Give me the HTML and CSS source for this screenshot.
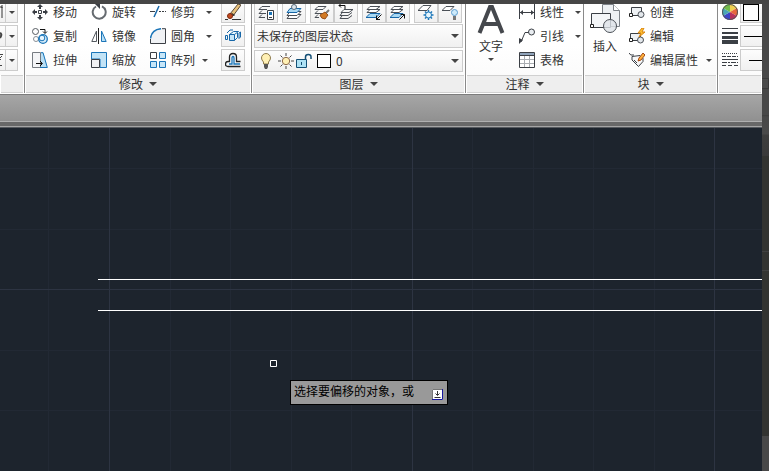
FILE: index.html
```html
<!DOCTYPE html>
<html lang="zh-CN">
<head>
<meta charset="utf-8">
<title>绘图</title>
<link rel="stylesheet" href="styles.css">
</head>
<body>
<div class="titlebar"></div>
<main class="app">
  <div class="ribbon">
    <section class="panel panel-edge">
      <div class="body">
        <button class="split" aria-label="绘图一"><svg class="cut" viewBox="0 0 5 16"><path d="M0 3h2v11M2 1v3" stroke="#333" fill="none"/></svg><i class="arrow"></i></button>
        <button class="split" aria-label="绘图二"><svg class="cut" viewBox="0 0 5 16"><path d="M0 5q2 1 1 3t-1 2" stroke="#444" stroke-width="2" fill="none"/></svg><i class="arrow"></i></button>
        <button class="split" aria-label="绘图三"><svg class="cut" viewBox="0 0 5 16"><path d="M0 2.500h3M0 7.500h1M0 13.500h2M2 4l-2 2" stroke="#444" fill="none"/></svg><i class="arrow"></i></button>
      </div>
      <div class="caption"></div>
    </section>

    <section class="panel panel-modify">
      <div class="body modify">
        <button class="cmd"><svg class="ico" viewBox="0 0 16 16"><path d="M8 0l3 3H9v2H7V3H5zM8 16l3-3H9v-2H7v2H5zM0 8l3-3v2h2v2H3v2zM16 8l-3-3v2h-2v2h2v2z" fill="#3b3f45"/><path d="M6.500 6.500h3v3h-3z" fill="#fff" stroke="#3b3f45"/></svg>移动</button>
        <button class="cmd"><svg class="ico" viewBox="0 0 16 16"><path d="M5 2.500A6.500 6.500 0 1 0 11 2.300" fill="none" stroke="#666b70" stroke-width="2"/><path d="M4 0h5v5z" fill="#3b3f45"/></svg>旋转</button>
        <button class="cmd"><svg class="ico" viewBox="0 0 16 16"><path d="M0 7.500h5M9 7.500h2M12 7.500h2M15 7.500h1" stroke="#3b3f45"/><path d="M4 13L9 2" stroke="#1767a8" stroke-width="1.500"/></svg>修剪<i class="arrow"></i></button>
        <button class="tool" aria-label="删除"><svg class="ico" viewBox="0 0 16 16"><path d="M5 10l8-10 3 1-8 11z" fill="#e9c27c" stroke="#5a4a38"/><path d="M7 9l3 2-1 1-3-2z" fill="#333"/><circle cx="5" cy="12" r="2.500" fill="#c4481c" stroke="#7c2b10"/><path d="M0 15.500h3M7 15.500h9" stroke="#333"/></svg></button>

        <button class="cmd"><svg class="ico" viewBox="0 0 16 16"><circle cx="3.500" cy="3.500" r="3" fill="#fff" stroke="#555a60"/><circle cx="4" cy="11" r="2.500" fill="#fff" stroke="#8a9096"/><circle cx="11" cy="11" r="4.300" fill="#d5ecfa" stroke="#1b75b8" stroke-width="1.300"/><circle cx="10" cy="10" r="2.800" fill="#e8f5fd" stroke="#1b75b8"/><path d="M8 1.500h5V5M11 3.500l2 2 2-2" fill="none" stroke="#111"/></svg>复制</button>
        <button class="cmd"><svg class="ico" viewBox="0 0 16 16"><path d="M5.500 3v10.500H.800z" fill="#fff" stroke="#555a60"/><path d="M10.500 3v10.500h4.700z" fill="#b9dff5" stroke="#1b75b8"/><path d="M7.500 0v16" stroke="#222"/></svg>镜像</button>
        <button class="cmd"><svg class="ico" viewBox="0 0 16 16"><path d="M.500 15.500v-4Q1.500 1.500 11.500.500h4v15z" fill="#f0f2f5"/><path d="M.500 10.500Q1.500 1.500 11 .700" fill="none" stroke="#1b75b8" stroke-width="1.500"/><path d="M.500 11v4.500h15V.700H12" fill="none" stroke="#3b3f45"/></svg>圆角<i class="arrow"></i></button>
        <button class="tool" aria-label="分解"><svg class="ico" viewBox="0 0 16 16"><path d="M4.500 6.500h5v6h-5z" fill="#c7e6f8" stroke="#1767a8"/><path d="M4.500 6.500l4-3h5l-4 3zM9.500 12.500l3-3V5" fill="#e8f6fd" stroke="#1767a8"/><path d="M.500 7.500h2v4h-2zM14 5l1.500-1v5L14 10.500z" fill="#e8f6fd" stroke="#1767a8"/><path d="M2 5l3-3h3" fill="none" stroke="#1767a8"/></svg></button>

        <button class="cmd"><svg class="ico" viewBox="0 0 16 16"><path d="M.500.500h8v15h-8z" fill="#f4f5f7" stroke="#777c82"/><path d="M9 .500h2.500l4 15H9z" fill="#b9dff5"/><path d="M9 .700h2l4.300 14.800H8" fill="none" stroke="#1b75b8"/><path d="M4 11.500h6M8 9l2.500 2.500L8 14" stroke="#111" fill="none"/></svg>拉伸</button>
        <button class="cmd"><svg class="ico" viewBox="0 0 16 16"><path d="M.500 6V.500h15v15H9V7H.500z" fill="#c2e3f6" stroke="#1b75b8"/><path d="M.500 7.500h8v8h-8z" fill="#f2f2f4" stroke="#3b3f45"/></svg>缩放</button>
        <button class="cmd tight"><svg class="ico" viewBox="0 0 16 16"><path d="M.500.500h6v6h-6z" fill="#fff" stroke="#3b3f45"/><path d="M9.500.500h6v6h-6zM.500 9.500h6v6h-6zM9.500 9.500h6v6h-6z" fill="#c7e6f8" stroke="#1b75b8"/></svg>阵列<i class="arrow"></i></button>
        <button class="tool" aria-label="偏移"><svg class="ico" viewBox="0 0 16 16"><path d="M15.500 14.500H3Q.500 14.500.500 12T3 9.500h1.500V5Q4.500 1.500 8 1.500T11.500 5v4.500h4" fill="#f4f8fb" stroke="#222" stroke-width="1.300"/><path d="M4 12h3V6q0-1.500 1-1.500T9 6v6h6" fill="none" stroke="#1b75b8" stroke-width="1.300"/></svg></button>
      </div>
      <div class="caption">修改<i class="arrow big"></i></div>
    </section>

    <section class="panel panel-layer">
      <div class="body layers">
        <div class="tools">
          <button class="tool" aria-label="图层特性"><svg class="ico" viewBox="0 0 16 16"><path d="M4 2.500h8M4 2.500l-3 3h8M4 6.500l-3 3h7M4 10.500l-3 3h6" fill="none" stroke="#4b5057"/><path d="M9.500 6.500h6v9h-6z" fill="#fff" stroke="#3b3f45"/><path d="M11 8h3v3h-3z" fill="#1b75b8"/><path d="M11 13.500h3" stroke="#3b3f45"/></svg></button>
          <button class="tool gap" aria-label="置为当前"><svg class="ico" viewBox="0 0 16 16"><path d="M4 10.500h11l-4 4H1z" fill="#fff" stroke="#4b5057"/><path d="M4 7.500h11l-4 4H1z" fill="#fff" stroke="#4b5057"/><path d="M4 4.500h11l-4 4H1z" fill="#a9d8f2" stroke="#1767a8"/><circle cx="8" cy="3" r="2.500" fill="#dce6ee" stroke="#5a6a78"/></svg></button>
          <button class="tool gap" aria-label="匹配图层"><svg class="ico" viewBox="0 0 16 16"><path d="M4 2.500h8l-3 3H1zM4 6.500l-3 3h7M4 10.500l-3 3h4" fill="none" stroke="#4b5057"/><path d="M12 9l3-3" stroke="#777" stroke-width="2"/><path d="M6 11l5-3 3 3-3 4q-4 0-5-4z" fill="#d27a24" stroke="#97501a"/></svg></button>
          <button class="tool" aria-label="上一个图层"><svg class="ico" viewBox="0 0 16 16"><path d="M6 5.500h9l-4 3H3zM4 9l-2 2.500h8l4-3M4 12l-2 2.500h8l4-3" fill="none" stroke="#4b5057"/><path d="M7 5V1.500H1M3-.500L1 1.500l2 2" fill="none" stroke="#111"/></svg></button>
          <button class="tool gap" aria-label="隔离"><svg class="ico" viewBox="0 0 16 16"><path d="M4 9.500h10l-4 4H0z" fill="#a9d8f2" stroke="#1767a8"/><path d="M4 5.500h10l-4 3H1zM4 2.500h10l-4 3H1z" fill="#fff" stroke="#4b5057"/><path d="M15.500 10.500l-5 5v-4M10 15.500h4" fill="none" stroke="#111"/></svg></button>
          <button class="tool" aria-label="取消隔离"><svg class="ico" viewBox="0 0 16 16"><path d="M4 9.500h9l-4 4H0z" fill="#a9d8f2" stroke="#1767a8"/><path d="M4 5.500h9l-4 3H1zM4 2.500h9l-4 3H1z" fill="#fff" stroke="#4b5057"/><path d="M9.500 15.500l5-5h-4M14.500 10.500v4" fill="none" stroke="#111"/></svg></button>
          <button class="tool gap" aria-label="冻结"><svg class="ico" viewBox="0 0 16 16"><path d="M5 1.500h8l-4 5H0z" fill="#fff" stroke="#4b5057"/><path d="M10.500 6v10M5.500 11h10M7 7.500l7 7M14 7.500l-7 7" stroke="#1b75b8" stroke-width="1.500"/><circle cx="10.500" cy="11" r="3" fill="#e5f5fd" stroke="#1b75b8"/></svg></button>
          <button class="tool" aria-label="关闭"><svg class="ico" viewBox="0 0 16 16"><path d="M4 2.500h8l-4 4H0z" fill="#fff" stroke="#4b5057"/><circle cx="12.500" cy="8.500" r="3" fill="#cdeafa" stroke="#5b9cd0"/><path d="M11 12h3v4h-3z" fill="#777"/></svg></button>
        </div>
        <label class="combo state"><select aria-label="图层状态"><option>未保存的图层状态</option></select><i class="arrow big"></i></label>
        <label class="combo layer">
          <svg class="bulb" viewBox="0 0 10 16"><path d="M2.500 11V9Q.500 7 .500 5a4.500 4.500 0 0 1 9 0q0 2-2 4v2z" fill="#fff0b4" stroke="#8d7a4a"/><path d="M3 11h4v3l-1 2H4l-1-2z" fill="#555"/></svg>
          <svg class="ico" viewBox="0 0 16 16"><path d="M8 0v3M8 13v3M0 8h3M13 8h3M2.500 2.500l2 2M11.500 11.500l2 2M13.500 2.500l-2 2M4.500 11.500l-2 2" stroke="#444"/><circle cx="8" cy="8" r="3.700" fill="#fff0b4" stroke="#8d6a4a"/></svg>
          <svg class="ico" viewBox="0 0 16 16"><path d="M.500 6.500h10v8H.500z" fill="#aee2f5" stroke="#134f75"/><path d="M9.500 6V4q0-2.500 2.800-2.500T15 4v2" fill="none" stroke="#134f75" stroke-width="1.500"/><path d="M5.500 9v3" stroke="#134f75"/></svg>
          <span class="swatch"></span>
          <select aria-label="图层"><option>0</option></select><i class="arrow big"></i>
        </label>
      </div>
      <div class="caption">图层<i class="arrow big"></i></div>
    </section>

    <section class="panel panel-note">
      <div class="body split-body">
        <button class="large"><svg class="large-ico" viewBox="0 0 30 30"><path d="M3.500 29L14 3h2l10.500 26M8 20h14" fill="none" stroke="#45484d" stroke-width="4"/></svg>文字<i class="arrow"></i></button>
        <div class="stack">
          <button class="cmd"><svg class="ico" viewBox="0 0 16 16"><path d="M.500 0v15M15.500 0v15M1 8.500h14" stroke="#3b3f45"/><path d="M1 8.500L4 6v5zM15 8.500L12 6v5z" fill="#3b3f45"/></svg>线性<i class="arrow"></i></button>
          <button class="cmd"><svg class="ico" viewBox="0 0 16 16"><circle cx="12.500" cy="4" r="3" fill="#e9edf1" stroke="#3b3f45"/><path d="M9.500 4.500H6L2 14" fill="none" stroke="#3b3f45"/><path d="M0 10l4 2-4 4z" fill="#3b3f45"/></svg>引线<i class="arrow"></i></button>
          <button class="cmd"><svg class="ico" viewBox="0 0 16 16"><path d="M.500.500h15v15H.500z" fill="#fff"/><path d="M1 1h14v2H1z" fill="#8fa3ba"/><path d="M1 7.500h14M1 11.500h14M5.500 4v11M10.500 4v11" stroke="#a9adb2"/><path d="M.500.500h15v15H.500zM0 3.500h16" fill="none" stroke="#3b3f45"/></svg>表格</button>
        </div>
      </div>
      <div class="caption">注释<i class="arrow big"></i></div>
    </section>

    <section class="panel panel-block">
      <div class="body split-body">
        <button class="large"><svg class="large-ico" viewBox="0 0 30 30"><path d="M12.500 .500h11l6 6v16h-17z" fill="#edf0f3" stroke="#7d8288"/><path d="M23.500 .500v6h6" fill="#fff" stroke="#7d8288"/><path d="M1.500 9.500h19v14h-19z" fill="#f4f6f8" stroke="#3b3f45"/><circle cx="20" cy="22" r="6.500" fill="#dfe3e8" fill-opacity=".8" stroke="#4b5057"/><path d="M.500 20.500h3v3h-3z" fill="#fff" stroke="#222"/></svg>插入</button>
        <div class="stack">
          <button class="cmd"><svg class="ico" viewBox="0 0 16 16"><path d="M2.500 3.500h10v8h-10z" fill="#eef1f4" stroke="#3b3f45"/><circle cx="12" cy="10.500" r="3" fill="#e4e8ec" stroke="#4b5057"/><path d="M.500 9.500h3v3h-3z" fill="#fff" stroke="#222"/></svg>创建</button>
          <button class="cmd"><svg class="ico" viewBox="0 0 16 16"><path d="M1.500 5.500h10v7h-10z" fill="#eef1f4" stroke="#3b3f45"/><circle cx="11.500" cy="12" r="3" fill="#e4e8ec" stroke="#4b5057"/><path d="M.500 10.500h3v3h-3z" fill="#fff" stroke="#222"/><path d="M13 0L9 5h3l-2 4 6-5h-3l2-4z" fill="#ffc234" stroke="#d98410"/></svg>编辑</button>
          <button class="cmd wide"><svg class="ico" viewBox="0 0 16 16"><path d="M0 1q1 3 5 2M3 4.500l8-1 3 3v3l-4.500 5L3 8z" fill="#f6f7f8" stroke="#3b3f45"/><path d="M5 8l3 3" stroke="#3b3f45"/><path d="M9 9l1-3 4-5 2 2-4 5z" fill="#ffb13a" stroke="#a34a18"/></svg>编辑属性<i class="arrow"></i></button>
        </div>
      </div>
      <div class="caption">块<i class="arrow big"></i></div>
    </section>

    <section class="panel panel-props">
      <div class="body props">
        <svg class="ico" viewBox="0 0 16 16"><path d="M8 8V0a8 8 0 0 1 7 4z" fill="#f0d050"/><path d="M8 8l7-4a8 8 0 0 1 0 8z" fill="#e8653d"/><path d="M8 8l7 4a8 8 0 0 1-7 4z" fill="#b8305c"/><path d="M8 8v8a8 8 0 0 1-7-4z" fill="#3d45c8"/><path d="M8 8l-7 4a8 8 0 0 1 0-8z" fill="#4aa7b5"/><path d="M8 8L1 4a8 8 0 0 1 7-4z" fill="#72bd4b"/><circle cx="8" cy="8" r="7.500" fill="none" stroke="#555"/></svg>
        <button class="field" aria-label="颜色"><span class="swatch tall"></span></button>
        <svg class="ico" viewBox="0 0 16 16"><path d="M0 .500h16" stroke="#3b3f45"/><path d="M0 5h16" stroke="#3b3f45" stroke-width="2"/><path d="M0 9.500h16" stroke="#3b3f45" stroke-width="3"/><path d="M0 14h16" stroke="#3b3f45" stroke-width="4"/></svg>
        <button class="field" aria-label="线宽"><span class="rule"></span></button>
        <svg class="ico" viewBox="0 0 16 16"><path d="M0 1.500h16" stroke="#3b3f45" stroke-dasharray="1 1"/><path d="M0 4.500h16" stroke="#3b3f45" stroke-dasharray="4 1"/><path d="M0 7.500h16" stroke="#3b3f45"/><path d="M0 10.500h16" stroke="#3b3f45" stroke-dasharray="5 1 2 1"/><path d="M0 13.500h16" stroke="#3b3f45" stroke-dasharray="4 2"/></svg>
        <button class="field" aria-label="线型"><span class="rule short"></span></button>
      </div>
      <div class="caption"></div>
    </section>
  </div>

  <div class="tabs"></div>
  <div class="frame"></div>

  <div class="canvas">
    <svg class="drawing" aria-label="图形">
      <g class="minor">
        <path d="M48.500 0v2000M170.500 0v2000M230.500 0v2000M291.500 0v2000M351.500 0v2000M472.500 0v2000M533.500 0v2000M593.500 0v2000M654.500 0v2000"/>
        <path d="M0 40.500h4000M0 101.500h4000M0 222.500h4000M0 282.500h4000"/>
      </g>
      <path class="major" d="M109.500 0v2000M412.500 0v2000M714.500 0v2000M0 161.500h4000"/>
      <path class="ink" d="M98 151.500h4000M98 182.500h4000"/>
      <path class="ink" d="M270.500 232.500h6v6h-6z"/>
    </svg>
    <div class="prompt">选择要偏移的对象，或
      <svg viewBox="0 0 11 11"><path d="M0 0h11v11H0z" fill="#fff"/><path d="M10.500 0v10.500H0" fill="none" stroke="#1717a0"/><path d="M.500 10V.500H10" fill="none" stroke="#777"/><path d="M5.500 2v4M3.500 4.500l2 2 2-2M2.500 8.500h6" fill="none" stroke="#333"/></svg>
    </div>
  </div>
</main>
<aside class="side"><div class="side-top"></div><div class="side-tab"></div><div class="side-fade"></div><div class="side-mid"></div><div class="side-slot"></div><div class="side-low"></div><div class="side-end"></div></aside>
</body>
</html>
```
FILE: styles.css
```css
* { box-sizing: border-box; }
body {
  margin: 0;
  min-height: 100vh;
  display: flex;
  overflow: hidden;
  background: #1d242d;
  font: 12px/16px "Noto Sans CJK SC", sans-serif;
  color: #333;
}
button, select {
  font: inherit;
  color: inherit;
  margin: 0;
  padding: 0;
  border: 0;
  background: none;
  appearance: none;
}
svg { display: block; flex: none; }
.titlebar {
  position: absolute;
  inset: 0 0 auto 0;
  height: 4px;
  background: #464646;
  z-index: 1;
}
.app { flex: 1; min-width: 0; display: flex; flex-direction: column; }

.ribbon { display: flex; background: #fff; overflow: hidden; border-bottom: 1px solid #fff; }
.panel { flex: none; display: flex; flex-direction: column; border-right: 1px solid #8a8a8a; }
.panel-edge { width: 25px; }
.panel-modify { width: 227px; }
.panel-layer { width: 214px; }
.panel-note { width: 118px; }
.panel-block { width: 134px; }
.panel-props { flex: 1; min-width: 0; overflow: hidden; border-right: 0; }
.body { height: 75px; background: linear-gradient(#fff 60%, #fbfbfb); }
.caption {
  height: 18px;
  margin: 0 1px;
  display: flex;
  align-items: center;
  justify-content: center;
  gap: 6px;
  background: #eee;
  border-top: 1px solid #d0d0d0;
  border-bottom: 1px solid #d0d0d0;
}
.arrow {
  flex: none;
  border: 3px solid transparent;
  border-top-color: #444;
  border-bottom: 0;
}
.arrow.big { border-width: 4px 4px 0; }
.ico { width: 16px; height: 16px; }

.cmd { height: 24px; display: flex; align-items: center; gap: 5px; white-space: nowrap; }
.cmd .arrow { margin-left: 6px; }
.cmd.tight .arrow { margin-left: 2px; }
.cmd.wide .arrow { margin-left: 3px; }
.tool, .field, .split, .combo {
  border: 1px solid #ccc;
  background: linear-gradient(#fdfdfd, #f0f0f0);
}
.tool { width: 24px; height: 22px; display: flex; align-items: center; justify-content: center; }

.split { width: 18px; height: 22px; margin: 0 0 2px; display: flex; align-items: center; border-left: 0; }
.panel-edge .body { padding-top: 1px; }
.split .arrow { margin-left: 3px; }
.cut { width: 6px; height: 20px; border-right: 1px solid #ccc; }

.modify {
  display: grid;
  grid-template-columns: 59px 59px 71px 24px;
  grid-template-rows: repeat(3, 24px);
  align-items: center;
  padding-left: 7px;
}

.layers { padding: 0 2px; }
.tools { display: flex; height: 24px; align-items: center; }
.tools .gap { margin-left: 4px; }
.combo { display: flex; align-items: center; padding: 0 3px 0 2px; }
.combo select { flex: 1; min-width: 0; height: 20px; }
.combo.state { height: 24px; margin-bottom: 2px; }
.combo.layer { height: 22px; gap: 2px; padding-left: 6px; }
.bulb { width: 10px; height: 16px; margin-right: 5px; }
.swatch { flex: none; width: 14px; height: 14px; margin: 0 3px; background: #fff; border: 1px solid #000; }
.swatch.tall { width: 16px; height: 17px; margin: 0; }

.split-body { display: flex; }
.large { width: 50px; display: flex; flex-direction: column; align-items: center; padding-top: 4px; }
.large-ico { width: 30px; height: 30px; margin-bottom: 4px; }
.large .arrow { margin-top: 4px; }
.stack { flex: 1; padding-left: 3px; }
.panel-block .large { width: 42px; }

.props {
  display: grid;
  grid-template-columns: 16px 60px;
  grid-template-rows: repeat(3, 24px);
  column-gap: 2px;
  align-items: center;
  padding-left: 4px;
}
.field { height: 22px; display: flex; align-items: center; padding-left: 2px; }
.rule { width: 40px; height: 1px; margin-left: 1px; background: #000; }
.rule.short { margin-left: 6px; }

.tabs { height: 28px; background: linear-gradient(#a6a6a6, #909090); border-top: 1px solid #7c7c7c; border-bottom: 1px solid #b0b0b0; }
.frame { height: 5px; background: #686868; border-bottom: 1px solid #a5a5a5; }

.canvas { flex: 1; position: relative; overflow: hidden; background: #1d242d; border-top: 1px solid #55595e; }
.drawing { position: absolute; inset: 0; width: 100%; height: 100%; fill: none; }
.minor { stroke: #222934; }
.major { stroke: #2d3442; }
.ink { stroke: #fff; }
.prompt {
  position: absolute;
  left: 290px;
  top: 252px;
  padding: 2px 4px 5px 3px;
  display: flex;
  align-items: flex-end;
  gap: 18px;
  color: #000;
  background: #999;
  border: 1px solid #000;
  white-space: nowrap;
}
.prompt svg { width: 11px; height: 11px; margin-bottom: -1px; }

.side { width: 7px; display: flex; flex-direction: column; background: #333431; }
.side-top { height: 78px; background: #484848; }
.side-tab { height: 11px; background: #4c4c4c; border: 1px solid #3a3a3a; border-left: 0; }
.side-fade { height: 67px; background: linear-gradient(#484848 26px, #3d3d3d 26px, #484848 28px, #4a4a4a 45px, #3e3e3e 46px, #3a3a3a); }
.side-mid { height: 95px; }
.side-slot { height: 20px; border-top: 1px solid #414141; border-bottom: 1px solid #414141; }
.side-low { flex: 1; }
.side-end { height: 35px; background: #484848; }
```
